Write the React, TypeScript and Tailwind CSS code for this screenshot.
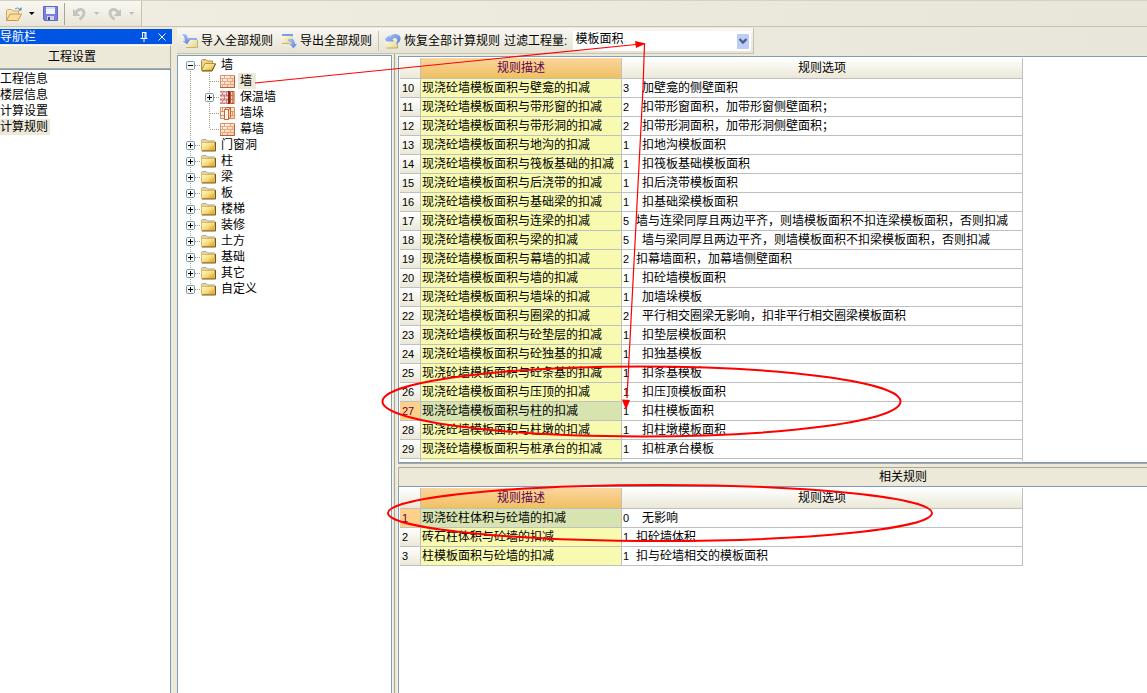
import React from "react";

type Rule = { no: number; desc: string; value: string; option: string; tight?: boolean };

const mainRules: Rule[] = [
  { no: 10, desc: "现浇砼墙模板面积与壁龛的扣减", value: "3", option: "加壁龛的侧壁面积" },
  { no: 11, desc: "现浇砼墙模板面积与带形窗的扣减", value: "2", option: "扣带形窗面积，加带形窗侧壁面积；" },
  { no: 12, desc: "现浇砼墙模板面积与带形洞的扣减", value: "2", option: "扣带形洞面积，加带形洞侧壁面积；" },
  { no: 13, desc: "现浇砼墙模板面积与地沟的扣减", value: "1", option: "扣地沟模板面积" },
  { no: 14, desc: "现浇砼墙模板面积与筏板基础的扣减", value: "1", option: "扣筏板基础模板面积" },
  { no: 15, desc: "现浇砼墙模板面积与后浇带的扣减", value: "1", option: "扣后浇带模板面积" },
  { no: 16, desc: "现浇砼墙模板面积与基础梁的扣减", value: "1", option: "扣基础梁模板面积" },
  { no: 17, desc: "现浇砼墙模板面积与连梁的扣减", value: "5", option: "墙与连梁同厚且两边平齐，则墙模板面积不扣连梁模板面积，否则扣减", tight: true },
  { no: 18, desc: "现浇砼墙模板面积与梁的扣减", value: "5", option: "墙与梁同厚且两边平齐，则墙模板面积不扣梁模板面积，否则扣减" },
  { no: 19, desc: "现浇砼墙模板面积与幕墙的扣减", value: "2", option: "扣幕墙面积，加幕墙侧壁面积", tight: true },
  { no: 20, desc: "现浇砼墙模板面积与墙的扣减", value: "1", option: "扣砼墙模板面积" },
  { no: 21, desc: "现浇砼墙模板面积与墙垛的扣减", value: "1", option: "加墙垛模板" },
  { no: 22, desc: "现浇砼墙模板面积与圈梁的扣减", value: "2", option: "平行相交圈梁无影响，扣非平行相交圈梁模板面积" },
  { no: 23, desc: "现浇砼墙模板面积与砼垫层的扣减", value: "1", option: "扣垫层模板面积" },
  { no: 24, desc: "现浇砼墙模板面积与砼独基的扣减", value: "1", option: "扣独基模板" },
  { no: 25, desc: "现浇砼墙模板面积与砼条基的扣减", value: "1", option: "扣条基模板" },
  { no: 26, desc: "现浇砼墙模板面积与压顶的扣减", value: "1", option: "扣压顶模板面积" },
  { no: 27, desc: "现浇砼墙模板面积与柱的扣减", value: "1", option: "扣柱模板面积" },
  { no: 28, desc: "现浇砼墙模板面积与柱墩的扣减", value: "1", option: "扣柱墩模板面积" },
  { no: 29, desc: "现浇砼墙模板面积与桩承台的扣减", value: "1", option: "扣桩承台模板" },
];

const relatedRules: Rule[] = [
  { no: 1, desc: "现浇砼柱体积与砼墙的扣减", value: "0", option: "无影响" },
  { no: 2, desc: "砖石柱体积与砼墙的扣减", value: "1", option: "扣砼墙体积", tight: true },
  { no: 3, desc: "柱模板面积与砼墙的扣减", value: "1", option: "扣与砼墙相交的模板面积", tight: true },
];

const navItems = ["工程信息", "楼层信息", "计算设置", "计算规则"];
const closedFolders = ["门窗洞", "柱", "梁", "板", "楼梯", "装修", "土方", "基础", "其它", "自定义"];

/* ---------- icons ---------- */

function Gradients() {
  return (
    <svg className="absolute size-0" aria-hidden="true">
      <defs>
        <linearGradient id="gold" x1="0" y1="0" x2="1" y2="1">
          <stop offset="0" stopColor="#fffbd0" />
          <stop offset="0.5" stopColor="#f8dc80" />
          <stop offset="1" stopColor="#e09a10" />
        </linearGradient>
        <linearGradient id="sheet" x1="0" y1="0" x2="1" y2="1">
          <stop offset="0" stopColor="#fffef0" />
          <stop offset="1" stopColor="#e6d480" />
        </linearGradient>
        <linearGradient id="brick" x1="0" y1="0" x2="1" y2="1">
          <stop offset="0" stopColor="#ffffff" />
          <stop offset="1" stopColor="#fbc896" />
        </linearGradient>
        <linearGradient id="blue" x1="0" y1="0" x2="1" y2="1">
          <stop offset="0" stopColor="#a9c4f8" />
          <stop offset="1" stopColor="#5a80dc" />
        </linearGradient>
      </defs>
    </svg>
  );
}

function ClosedFolder() {
  return (
    <svg width="16" height="16" viewBox="0 0 16 16" className="shrink-0">
      <path d="M1.5 5V3.5L2.5 2.5H6L7.5 4H14.5V6" fill="#e4d8a8" stroke="#b0a478" />
      <path d="M1.5 5.5H14.5V13.5H1.5Z" fill="url(#gold)" stroke="#d8b860" />
      <path d="M2 14H15.5V5" fill="none" stroke="#6c5a24" />
    </svg>
  );
}

function OpenFolder() {
  return (
    <svg width="16" height="16" viewBox="0 0 16 16" className="shrink-0">
      <path d="M1.5 13V3.5L2.5 2.5H6L7.5 4H12.5V7" fill="#efd48a" stroke="#a8904c" />
      <path d="M1.5 13.5L5 6.5H15.5L12 13.5Z" fill="url(#gold)" stroke="#c09030" />
      <path d="M2 14H12L15.5 7" fill="none" stroke="#6c5214" />
    </svg>
  );
}

function Wall() {
  return (
    <svg width="16" height="16" viewBox="0 0 16 16" className="shrink-0">
      <path d="M1.5 2.5H15.5V14.5H1.5Z" fill="url(#brick)" stroke="#dc8c64" />
      <path d="M2 5.5H15M2 8.5H15M2 11.5H15M5.5 3V5M11.5 3V5M8.5 6V8M3.5 6V8M13.5 6V8M5.5 9V11M11.5 9V11M8.5 12V14M3.5 12V14" stroke="#e8a888" fill="none" />
      <path d="M1 14.5H15.5V3" stroke="#b4603c" fill="none" />
    </svg>
  );
}

function InsulatedWall() {
  return (
    <svg width="16" height="16" viewBox="0 0 16 16" className="shrink-0">
      <path d="M1 2H10V15H1Z" fill="#e8b4b0" />
      <path d="M1 4.5H9M1 8.5H9M1 12.5H9" stroke="#fae4e0" />
      <path d="M1 2.5H9M1 6.5H9M1 10.5H9M1 14.5H9" stroke="#c47474" strokeDasharray="2 1" />
      <path d="M3.5 3V6M7.5 3V6M5.5 7V10M3.5 11V14M7.5 11V14" stroke="#cc8480" />
      <path d="M9 2H11V15H9Z" fill="#8e2424" />
      <path d="M11.5 2.5H15V14.5H11.5Z" fill="#fbd8b4" stroke="#b05028" />
      <path d="M13.5 3V14" stroke="#d88450" />
      <path d="M12 6.5H15M12 10.5H15" stroke="#d07848" />
    </svg>
  );
}

function WallPier() {
  return (
    <svg width="16" height="16" viewBox="0 0 16 16" className="shrink-0">
      <path d="M1.5 2.5H15.5V13.5H1.5Z" fill="url(#brick)" stroke="#dc8c64" />
      <path d="M2 6.5H5M2 10.5H5M12 6.5H15M12 10.5H15M3.5 3V6M13.5 7V10" stroke="#e0986c" />
      <path d="M5.5 4.5L7.5 2.5H11.5V12L9.5 14.5H5.5Z" fill="#f8d0ac" stroke="#c46438" />
      <path d="M6 5H9V14H6Z" fill="#fff8f0" />
      <path d="M9.5 5V14M6 4.5H9.5L11.5 3" stroke="#c46438" fill="none" />
    </svg>
  );
}

function ImportIcon() {
  return (
    <svg width="16" height="16" viewBox="0 0 16 16" className="shrink-0">
      <path d="M4 5H15V15H4Z" fill="url(#sheet)" />
      <path d="M6 6H15" stroke="#8eaaf0" strokeWidth="2" />
      <path d="M4 14.5H15.5V7" stroke="#c0b680" fill="none" />
      <path d="M0 1L4 1.5Q6 4 6 7H8L5 11.5L0.8 8H3Q3 4 0 1Z" fill="url(#blue)" />
    </svg>
  );
}

function ExportIcon() {
  return (
    <svg width="16" height="16" viewBox="0 0 16 16" className="shrink-0">
      <path d="M1 1H12V11H1Z" fill="url(#sheet)" />
      <path d="M1 2H12" stroke="#7c9af0" strokeWidth="2" />
      <path d="M1 10.5H9" stroke="#c0b680" />
      <path d="M7 6H12Q14 8 14 11H16L12.5 15.5L8.5 11H11Q11 8.5 7 8Z" fill="url(#blue)" />
    </svg>
  );
}

function RestoreIcon() {
  return (
    <svg width="16" height="16" viewBox="0 0 16 16" className="shrink-0">
      <path d="M1 6H13V15H1Z" fill="url(#sheet)" />
      <path d="M1.5 15H12.5V9" stroke="#b8ae78" fill="none" />
      <path d="M0 6L4.5 2V4Q7 0.5 11 1Q16 2 15.5 6Q15 10 11 11Q13 8 12 6Q10 4 7.5 6L9 8.5H1.5Z" fill="url(#blue)" />
    </svg>
  );
}

function OpenFileIcon() {
  return (
    <svg width="17" height="16" viewBox="0 0 17 16">
      <path d="M0.5 14V4.5L1.5 3.5H5.5L7 5H12.5V8" fill="#f8e4b0" stroke="#c8a868" />
      <path d="M0.5 14.5L4 8H15.5L12 14.5Z" fill="#fbdc98" stroke="#c89850" />
      <path d="M9 3Q12 0.5 14 3.5" stroke="#7898b8" fill="none" />
      <path d="M12 4.5H15.5V1Z" fill="#5c80a8" />
    </svg>
  );
}

function SaveIcon() {
  return (
    <svg width="15" height="15" viewBox="0 0 15 15">
      <path d="M0.5 0.5H14.5V14.5H1.5L0.5 13.5Z" fill="#7a80dc" stroke="#6068c0" />
      <path d="M3 1H12V8H3Z" fill="#f4f6ff" />
      <path d="M3 1H12V3H3Z" fill="#d4dcf6" />
      <path d="M4 10H11V14H4Z" fill="#cdd2ee" />
      <path d="M5 11H7V14H5Z" fill="#3c449c" />
    </svg>
  );
}

function UndoIcon({ flip = false }: { flip?: boolean }) {
  return (
    <svg width="13" height="14" viewBox="0 0 13 14" className={flip ? "-scale-x-100" : ""}>
      <path d="M2.5 6Q5 2 8.5 2.5Q12 4 10.5 8Q9.5 10.5 6.5 12.5" stroke="#c6c4be" strokeWidth="2.8" fill="none" />
      <path d="M0 2L7.5 9H0Z" fill="#c6c4be" />
    </svg>
  );
}

function Caret({ className }: { className: string }) {
  return (
    <svg width="6" height="3" viewBox="0 0 6 3" className={className}>
      <path d="M0 0H5.5L2.75 3Z" fill="currentColor" />
    </svg>
  );
}

function PinIcon() {
  return (
    <svg width="8" height="10" viewBox="0 0 8 10">
      <path d="M2 0.5H6M2.5 0V6M5 0V6M6 0V6M0.5 6.5H7.5M4 6V10" stroke="#fff" fill="none" />
    </svg>
  );
}

function CloseIcon() {
  return (
    <svg width="8" height="8" viewBox="0 0 8 8">
      <path d="M0.5 0.5L7.5 7.5M7.5 0.5L0.5 7.5" stroke="#fff" />
    </svg>
  );
}

/* ---------- tree ---------- */

type Guide = { up?: boolean; down?: boolean; across?: boolean; box?: "plus" | "minus" };

function TreeGuide({ up, down, across, box }: Guide) {
  return (
    <svg width="19" height="16" viewBox="0 0 19 16" className="shrink-0">
      <g stroke="#a09c88" strokeDasharray="1 1" fill="none">
        {up && <path d="M9.5 0V8" />}
        {down && <path d="M9.5 8V16" />}
        {across && <path d="M10 8.5H19" />}
      </g>
      {box && (
        <>
          <rect x="5.5" y="4.5" width="8" height="8" rx="1" fill="#f6f5f0" stroke="#7898b5" />
          <path d={box === "plus" ? "M7 8.5H12M9.5 6V11" : "M7 8.5H12"} stroke="#000" />
        </>
      )}
    </svg>
  );
}

function TreeRow({ guides, icon, label, selected = false }: { guides: Guide[]; icon: React.ReactNode; label: string; selected?: boolean }) {
  return (
    <li className="flex h-4 items-center">
      {guides.map((g, i) => (
        <TreeGuide key={i} {...g} />
      ))}
      {icon}
      <button type="button" className={selected ? "ml-[3px] h-4 bg-[#ece9d8] pr-1 pl-0.5 leading-4" : "ml-[3px] h-4 pr-1 pl-0.5 leading-4"}>
        {label}
      </button>
    </li>
  );
}

function RuleTree() {
  const through: Guide = { up: true, down: true };
  return (
    <ul className="pt-px pl-[3px]">
      <TreeRow guides={[{ down: true, across: true, box: "minus" }]} icon={<OpenFolder />} label="墙" />
      <TreeRow guides={[through, { ...through, across: true }]} icon={<Wall />} label="墙" selected />
      <TreeRow guides={[through, { ...through, across: true, box: "plus" }]} icon={<InsulatedWall />} label="保温墙" />
      <TreeRow guides={[through, { ...through, across: true }]} icon={<WallPier />} label="墙垛" />
      <TreeRow guides={[through, { up: true, across: true }]} icon={<Wall />} label="幕墙" />
      {closedFolders.map((name, i) => (
        <TreeRow
          key={name}
          guides={[{ up: true, down: i < closedFolders.length - 1, across: true, box: "plus" }]}
          icon={<ClosedFolder />}
          label={name}
        />
      ))}
    </ul>
  );
}

/* ---------- rule grid ---------- */

const cell = "border-r border-b border-[#c0c0c0] p-0 font-normal whitespace-nowrap";

function RuleGrid({ rules, current, spare = false }: { rules: Rule[]; current: number; spare?: boolean }) {
  return (
    <table className="w-[623px] table-fixed border-separate border-spacing-0">
      <colgroup>
        <col className="w-[21px]" />
        <col className="w-[201px]" />
        <col className="w-[401px]" />
      </colgroup>
      <thead>
        <tr className="h-[21px]">
          <th className={`${cell} bg-linear-to-b from-white to-[#ebe8d7]`} aria-label="序号" />
          <th className={`${cell} bg-linear-to-b from-[#fbd59c] to-[#efc062] text-center leading-5 text-[#600050]`}>规则描述</th>
          <th className={`${cell} bg-linear-to-b from-white to-[#ebe8d7] text-center leading-5`}>规则选项</th>
        </tr>
      </thead>
      <tbody>
        {rules.map((r) => {
          const on = r.no === current;
          return (
            <tr key={r.no} className="h-[19px]">
              <td className={`${cell} ${on ? "bg-[#ffd08a] text-[#600050]" : "bg-linear-to-b from-white to-[#ebe8d7]"} pl-0.5 text-[11px] leading-[18px]`}>
                {r.no}
              </td>
              <td className={`${cell} ${on ? "bg-[#d8e4b0]" : "bg-[#f8fbaf]"} pl-px leading-[18px]`}>{r.desc}</td>
              <td className={`${cell} bg-white pl-px leading-[18px]`}>
                <div className="flex">
                  <span className={r.tight ? "w-[13px] text-[11px]" : "w-[19px] text-[11px]"}>{r.value}</span>
                  <span>{r.option}</span>
                </div>
              </td>
            </tr>
          );
        })}
        {spare && (
          <tr className="h-[19px]">
            <td className={`${cell} bg-white`} />
            <td className={`${cell} bg-[#f8fbaf]`} />
            <td className={`${cell} bg-white`} />
          </tr>
        )}
      </tbody>
    </table>
  );
}

/* ---------- red annotations drawn over the window ---------- */

function Annotations() {
  return (
    <svg width="1147" height="693" viewBox="0 0 1147 693" className="pointer-events-none absolute top-0 left-0" fill="none" stroke="#f00">
      <path d="M255 83L636 44.5M644.5 44L643 88L627 398" strokeWidth="1.2" />
      <path d="M635 41L646 43.5L636 48Z" fill="#f00" stroke="none" />
      <path d="M622 399.5L630 400L626 410Z" fill="#f00" stroke="none" />
      <ellipse cx="641.5" cy="401.5" rx="259" ry="35" strokeWidth="2" />
      <ellipse cx="660" cy="513" rx="272" ry="28" strokeWidth="2" />
    </svg>
  );
}

export default function App() {
  return (
    <div className="relative flex h-screen flex-col overflow-hidden bg-[#ece9d8] font-['Liberation_Sans','Noto_Sans_CJK_SC',sans-serif] text-xs text-black">
      <Gradients />
      <header className="flex h-[27px] shrink-0 border-t border-b border-t-[#d8d2bd] border-b-[#c5c2b2] bg-linear-to-r from-[#f0eee2] to-[#e8e6da]">
        <div className="flex items-center border-r border-[#c5c2b2] bg-linear-to-b from-[#f8f7f2] to-[#e9e6d8] pr-1.5 pl-1.5">
          <button type="button" aria-label="打开"><OpenFileIcon /></button>
          <button type="button" aria-label="打开选项" className="ml-1.5"><Caret className="text-black" /></button>
          <button type="button" aria-label="保存" className="ml-2"><SaveIcon /></button>
          <span className="ml-1.5 h-[22px] w-px bg-[#a8a594]" />
          <button type="button" aria-label="撤销" disabled className="ml-2"><UndoIcon /></button>
          <button type="button" aria-label="撤销选项" disabled className="ml-2"><Caret className="text-[#c0beb8]" /></button>
          <button type="button" aria-label="重做" disabled className="ml-2"><UndoIcon flip /></button>
          <button type="button" aria-label="重做选项" disabled className="ml-2"><Caret className="text-[#c0beb8]" /></button>
        </div>
      </header>

      <div className="flex min-h-0 flex-1">
        <aside className="mt-0.5 flex w-[172px] shrink-0 flex-col">
          <div className="flex h-[15px] items-center gap-2.5 bg-[#0054e3] pr-1.5 leading-4 text-white">
            <h2 className="flex-1">导航栏</h2>
            <button type="button" aria-label="固定"><PinIcon /></button>
            <button type="button" aria-label="关闭"><CloseIcon /></button>
          </div>
          <button type="button" className="mt-px mr-px h-6 border-t border-r border-b border-t-white border-r-[#aca899] border-b-[#aca899] pr-[26px] text-right">
            <span className="mr-12 leading-[22px]">工程设置</span>
          </button>
          <ul className="mr-px flex-1 border-t border-r border-[#7f9db9] bg-white pt-px">
            {navItems.map((n) => (
              <li key={n} className="h-4">
                <button type="button" className={n === "计算规则" ? "block h-4 bg-[#ece9d8] pr-0.5 leading-4" : "block h-4 pr-0.5 leading-4"}>
                  {n}
                </button>
              </li>
            ))}
          </ul>
        </aside>

        <main className="mt-px ml-[5px] flex min-w-0 flex-1 flex-col">
          <div className="flex h-[26px] shrink-0 bg-linear-to-r from-[#f0eee2] to-[#e8e6da]">
            <div className="flex items-center border-r border-b border-[#c5c2b2] bg-linear-to-b from-[#f8f7f2] to-[#e6e3d3] pr-0.5 pl-[5px] whitespace-nowrap">
              <button type="button" className="flex items-center gap-[3px]"><ImportIcon />导入全部规则</button>
              <button type="button" className="ml-2 flex items-center gap-[3px]"><ExportIcon />导出全部规则</button>
              <span className="ml-1.5 h-5 w-px bg-[#c5c2b2]" />
              <button type="button" className="ml-1.5 flex items-center gap-[3px]"><RestoreIcon />恢复全部计算规则</button>
              <label htmlFor="quantity" className="ml-1">过滤工程量:</label>
              <div className="relative ml-1.5">
                <select id="quantity" defaultValue="模板面积" className="block h-5 w-[178px] appearance-none bg-white pb-1 pl-0.5 leading-4 outline-none">
                  <option>模板面积</option>
                </select>
                <svg width="12" height="15" viewBox="0 0 12 15" className="pointer-events-none absolute top-[3px] right-0.5">
                  <rect width="12" height="15" rx="1" fill="#bccdf8" />
                  <path d="M2.5 5L6 8.5L9.5 5" stroke="#4d6185" strokeWidth="2.4" fill="none" />
                </svg>
              </div>
            </div>
          </div>

          <div className="flex min-h-0 flex-1">
            <section aria-label="构件" className="mt-px w-[215px] shrink-0 border-t border-r border-l border-[#7f9db9] bg-white">
              <RuleTree />
            </section>
            <div className="w-1.5 shrink-0 border-r border-l border-r-[#f6f4ea] border-l-[#f6f4ea]">
              <div className="ml-px h-full w-px bg-[#aca899]" />
            </div>
            <div className="mt-0.5 flex min-w-0 flex-1 flex-col">
              <section aria-label="计算规则" className="h-[407px] shrink-0 overflow-hidden border border-r-0 border-[#7f9db9] bg-white p-px">
                <div className="h-[403px] overflow-hidden">
                  <RuleGrid rules={mainRules} current={27} spare />
                </div>
              </section>
              <div className="h-1 shrink-0 border-t border-[#aca899]" />
              <h3 className="h-[19px] shrink-0 border-t border-l border-[#aca899] pl-[260px] text-center leading-[18px]">相关规则</h3>
              <section aria-label="相关规则" className="min-h-0 flex-1 overflow-hidden border-t border-l border-[#7f9db9] bg-white p-px">
                <RuleGrid rules={relatedRules} current={1} />
              </section>
            </div>
          </div>
        </main>
      </div>
      <Annotations />
    </div>
  );
}
